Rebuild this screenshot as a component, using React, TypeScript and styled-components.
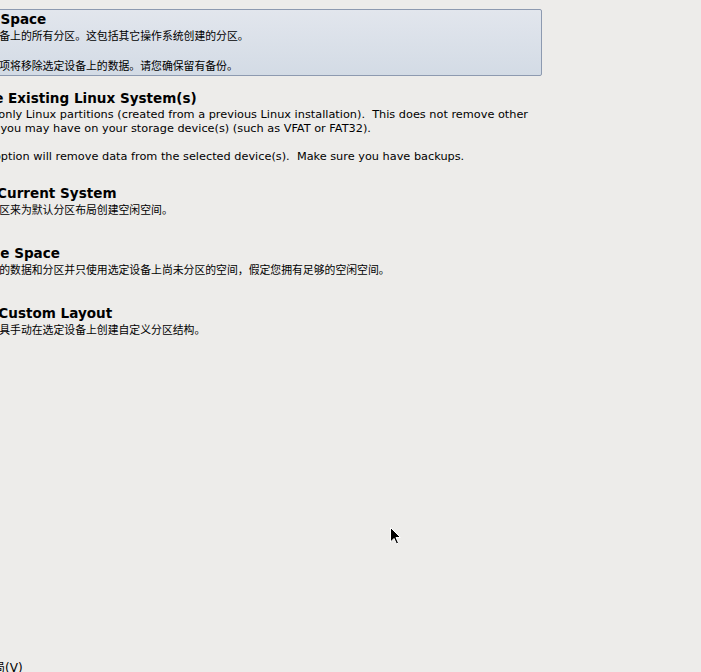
import React from "react";
import styled, { createGlobalStyle } from "styled-components";

const Global = createGlobalStyle`
  html, body { margin: 0; padding: 0; background: #edecea; overflow: hidden; }
  body { font-family: "DejaVu Sans", "Noto Sans CJK SC", sans-serif; color: #000; }
`;

const Screen = styled.div`
  position: relative;
  height: 672px;
  width: 701px;
  overflow: hidden;
  display: flex;
  flex-direction: column;
`;

const OptionList = styled.div`
  display: flex;
  flex-direction: column;
  gap: 13px;
  margin: 9px 0 0 -64px;
  width: 606px;
`;

const OptionRow = styled.div<{ $selected?: boolean }>`
  box-sizing: border-box;
  min-height: 47px;
  display: flex;
  flex-direction: column;
  justify-content: center;
  padding: ${(p) => (p.$selected ? "1px 0 1px 8px" : "0 0 0 8px")};
  border: 1px solid ${(p) => (p.$selected ? "#8d9ab0" : "transparent")};
  border-radius: 2px;
  background: ${(p) =>
    p.$selected ? "linear-gradient(#e2e6ed, #d3dbe5)" : "transparent"};
`;

const Title = styled.div`
  margin-left: -2px;
  padding-bottom: 2px;
  font-weight: bold;
  font-size: 13.56px;
  line-height: 16px;
  white-space: nowrap;
`;

const Desc = styled.div<{ $cjk?: boolean }>`
  margin-left: ${(p) => (p.$cjk ? "0" : "-2px")};
  font-size: ${(p) => (p.$cjk ? "10.85px" : "11.3px")};
  line-height: ${(p) => (p.$cjk ? "15px" : "14px")};
  white-space: pre;
`;

const Footer = styled.div`
  margin-top: auto;
  margin-bottom: -4px;
  margin-left: -103px;
  font-size: 12px;
  line-height: 15px;
  white-space: nowrap;
`;

const Cursor = styled.svg`
  position: absolute;
  left: 389px;
  top: 526px;
`;

const options = [
  {
    title: "Use All Space",
    cjk: true,
    desc:
      "删除所选设备上的所有分区。这包括其它操作系统创建的分区。\n\n提示：此选项将移除选定设备上的数据。请您确保留有备份。",
  },
  {
    title: "Replace Existing Linux System(s)",
    cjk: false,
    desc:
      "Removes only Linux partitions (created from a previous Linux installation).  This does not remove other\npartitions you may have on your storage device(s) (such as VFAT or FAT32).\n\nTip: This option will remove data from the selected device(s).  Make sure you have backups.",
  },
  {
    title: "Shrink Current System",
    cjk: true,
    desc: "缩小现有分区来为默认分区布局创建空闲空间。",
  },
  {
    title: "Use Free Space",
    cjk: true,
    desc: "保留您现有的数据和分区并只使用选定设备上尚未分区的空间，假定您拥有足够的空闲空间。",
  },
  {
    title: "Create Custom Layout",
    cjk: true,
    desc: "使用分区工具手动在选定设备上创建自定义分区结构。",
  },
];

export default function App() {
  return (
    <>
      <Global />
      <Screen>
        <OptionList>
          {options.map((o, i) => (
            <OptionRow key={o.title} $selected={i === 0}>
              <Title>{o.title}</Title>
              <Desc $cjk={o.cjk}>{o.desc}</Desc>
            </OptionRow>
          ))}
        </OptionList>
        <Footer>查看并修改分区布局(V)</Footer>
        <Cursor width="13" height="20" viewBox="0 0 13 20">
          <path
            d="M1.5 1.5 L1.5 16 L5 12.5 L7.5 18 L9.5 17 L7 11.5 L11.5 11.5 Z"
            fill="#000"
            stroke="#fff"
            strokeWidth="1"
            strokeLinejoin="round"
          />
        </Cursor>
      </Screen>
    </>
  );
}
